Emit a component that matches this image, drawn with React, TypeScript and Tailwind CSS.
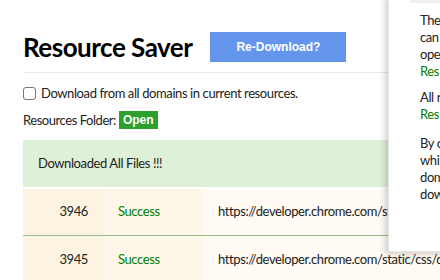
import React from "react";

const font = { fontFamily: "'Lato', 'Liberation Sans', sans-serif" };

export default function App() {
  return (
    <div className="relative w-[440px] h-[280px] overflow-hidden bg-white text-[#222]" style={font}>
      <div className="w-[620px] pl-[23px] pt-[32px]">
        <div className="flex items-center w-[365px]">
          <h1 className="text-[26px] font-bold leading-[30px] text-black tracking-[-0.5px]">Resource Saver</h1>
          <button className="ml-[18px] w-[136px] h-[30px] bg-[#6495ed] text-white text-[12px] font-bold" style={{ fontFamily: "'Liberation Sans', sans-serif" }}>
            Re-Download?
          </button>
        </div>
        <div className="mt-[10px] w-[365px] border-t border-[#e8e8e8]" />
        <label className="mt-[12px] flex items-center text-[13px] leading-[16px] tracking-[-0.4px]">
          <span className="w-[13px] h-[13px] rounded-[3px] border border-[#767676] bg-white" />
          <span className="ml-[5px]">Download from all domains in current resources.</span>
        </label>
        <div className="mt-[10px] flex items-center text-[13px] leading-[18px] tracking-[-0.45px]">
          <span>Resources Folder:</span>
          <span className="ml-[3px] px-[4px] h-[18px] bg-[#2ca02c] text-white text-[12px] font-bold leading-[18px] tracking-normal" style={{ fontFamily: "'Liberation Sans', sans-serif" }}>Open</span>
        </div>
        <div className="mt-[11px] h-[47px] bg-[#dff0d8] flex items-center pl-[15px] text-[13px] tracking-[-0.4px]">Downloaded All Files !!!</div>
        <div className="mt-[2px] flex h-[47px] border-b border-[#8dc08d] text-[13px] tracking-[-0.4px]">
          <div className="w-[80px] bg-[#fdf3e1] flex items-center justify-end pr-[15px]">3946</div>
          <div className="w-[100px] bg-[#fef7e9] flex items-center pl-[15px] text-[#008000]">Success</div>
          <div className="flex-1 bg-[#fffaf4] flex items-center pl-[15px]">https://developer.chrome.com/static/css/main.css</div>
        </div>
        <div className="flex h-[47px] text-[13px] tracking-[-0.4px]">
          <div className="w-[80px] bg-[#fdf3e1] flex items-center justify-end pr-[15px]">3945</div>
          <div className="w-[100px] bg-[#fef7e9] flex items-center pl-[15px] text-[#008000]">Success</div>
          <div className="flex-1 bg-[#fffaf4] flex items-center pl-[15px]">https://developer.chrome.com/static/css/devsite.css</div>
        </div>
      </div>
      <div className="absolute left-[388px] top-[-4px] w-[80px] h-[256px] bg-white border border-[#e4e4e4] shadow-[-3px_2px_6px_rgba(0,0,0,0.18)]">
        <div className="ml-[21px] h-[6px] bg-[#eeeeee]" />
        <div className="pl-[31px] pt-[9px] text-[13px] leading-[17px] w-[200px] tracking-[-0.4px]">
          <p>The</p>
          <p>can</p>
          <p>ope</p>
          <p className="text-[#008000]">Res</p>
          <p className="mt-[9px]">All r</p>
          <p className="text-[#008000]">Res</p>
          <p className="mt-[12px]">By c</p>
          <p>whi</p>
          <p>dom</p>
          <p>dow</p>
        </div>
      </div>
    </div>
  );
}
